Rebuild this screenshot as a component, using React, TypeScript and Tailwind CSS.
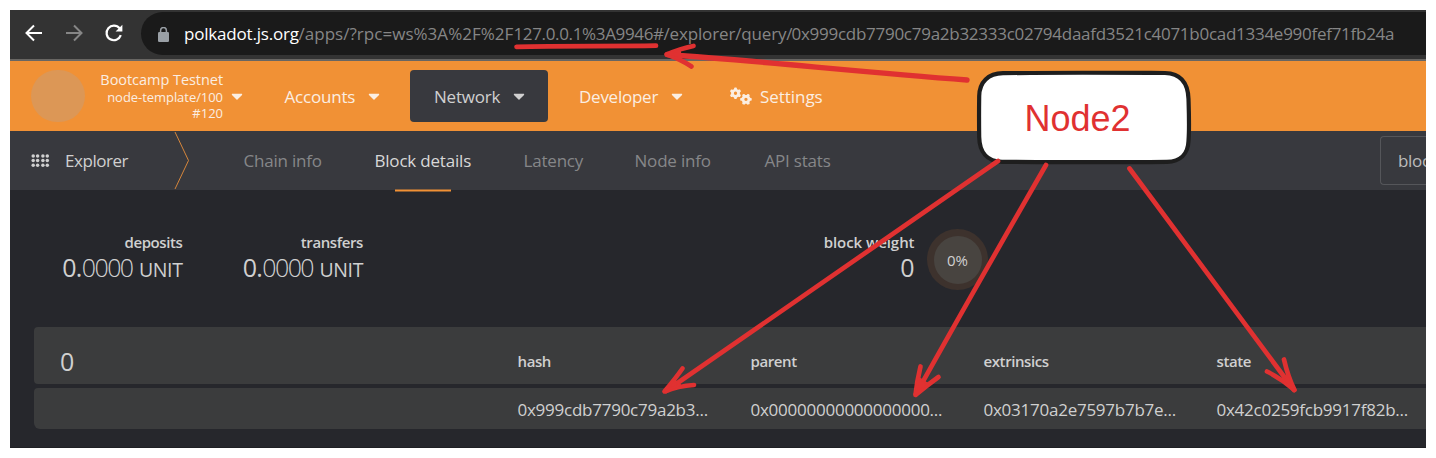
import React from 'react';
import { FaCaretDown } from 'react-icons/fa';
import { FaGears } from 'react-icons/fa6';

const columns = [
  { label: 'hash', value: '0x999cdb7790c79a2b3...' },
  { label: 'parent', value: '0x00000000000000000...' },
  { label: 'extrinsics', value: '0x03170a2e7597b7b7e...' },
  { label: 'state', value: '0x42c0259fcb9917f82b...' },
];

function BrowserBar() {
  return (
    <div className="flex h-[51px] shrink-0 border-b-2 border-[#686663] bg-[#333333] pt-[2px]">
      <div className="flex h-[43px] w-[131px] shrink-0 items-center pl-[15px]">
        <svg className="size-[18px] -translate-y-px" viewBox="0 0 18 18" fill="none" stroke="#fff" strokeWidth="2">
          <path d="M17 9H2M9 1.5L1.5 9L9 16.5" />
        </svg>
        <svg className="ml-[22px] size-[18px] -translate-y-px" viewBox="0 0 18 18" fill="none" stroke="#868686" strokeWidth="2">
          <path d="M1 9H16M9 1.5L16.5 9L9 16.5" />
        </svg>
        <svg className="ml-[21px] size-[20px] -translate-y-px" viewBox="0 0 20 20" fill="none">
          <path d="M15.6 5.4A7.3 7.3 0 1 0 16.8 12.2" stroke="#fff" strokeWidth="2.2" />
          <path d="M18.4 1.8V8.6H11.6Z" fill="#fff" />
        </svg>
      </div>
      <div className="flex h-[43px] min-w-0 flex-1 items-center rounded-l-full bg-[#1a1a1a] pl-[17px]">
        <svg className="mt-px h-[15px] w-[11px] shrink-0" viewBox="0 0 11 15">
          <rect x="0" y="5" width="11" height="10" rx="1.2" fill="#9aa0a6" />
          <path d="M2.6 6V3.4a2.9 2.9 0 0 1 5.8 0V6" fill="none" stroke="#9aa0a6" strokeWidth="1.5" />
        </svg>
        <div className="ml-[15px] flex whitespace-nowrap text-[17px] leading-[24px] text-[#868686]">
          <span className="w-[114.5px] shrink-0 tracking-[-0.2px] text-white">polkadot.js.org</span>
          <span className="w-[215px] shrink-0 tracking-[0.03px]">/apps/?rpc=ws%3A%2F%2F</span>
          <span className="w-[150px] shrink-0 tracking-[-0.35px]">127.0.0.1%3A9946#</span>
          <span className="w-[128px] shrink-0 tracking-[-0.15px]">/explorer/query/</span>
          <span className="tracking-[-0.27px]">0x999cdb7790c79a2b32333c02794daafd3521c4071b0cad1334e990fef71fb24a</span>
        </div>
      </div>
    </div>
  );
}

function Caret() {
  return <FaCaretDown className="size-[18px] shrink-0" />;
}

function MenuBar() {
  return (
    <div className="flex h-[70px] shrink-0 items-center bg-[#f19135] text-[17px] text-[#fbeee2]">
      <div className="ml-[21px] h-[52px] w-[54px] shrink-0 rounded-full bg-[#dc9756]" />
      <div className="w-[138px] shrink-0 pb-px text-right">
        <div className="text-[14.5px] leading-[19px] tracking-[-0.05px]">Bootcamp Testnet</div>
        <div className="text-[13px] leading-[16px] tracking-[-0.05px]">node-template/100</div>
        <div className="text-[13px] leading-[16px]">#120</div>
      </div>
      <div className="ml-[5px] w-[56.5px]"><Caret /></div>
      <div className="flex w-[115.5px] shrink-0 items-center">
        <span className="w-[80px] pt-[2px] tracking-[-0.2px]">Accounts</span>
        <Caret />
      </div>
      <div className="ml-[10px] flex h-[52px] w-[138px] shrink-0 items-center rounded-[4px] bg-[#38393e] pl-[24px] text-[#d0d0d0]">
        <span className="w-[76px] pt-[2px] tracking-[-0.2px]">Network</span>
        <Caret />
      </div>
      <div className="ml-[31px] flex w-[151px] shrink-0 items-center">
        <span className="w-[89px] pt-[2px] tracking-[-0.25px]">Developer</span>
        <Caret />
      </div>
      <FaGears className="h-[18px] w-[22px] shrink-0" />
      <span className="ml-[8px] pt-[2px] tracking-[-0.05px]">Settings</span>
    </div>
  );
}

function TabBar() {
  return (
    <div className="flex h-[59px] w-[1416px] shrink-0 items-center bg-[#38393e] text-[17px] tracking-[-0.2px] text-[#868789]">
      <svg className="ml-[21px] h-[14px] w-[19px] shrink-0" viewBox="0 0 19 14" fill="#d0d0d0">
        {[2.2, 6.6, 11.9, 16.3].map((x) =>
          [2, 6.6, 11.2].map((y) => <circle key={`${x}-${y}`} cx={x} cy={y} r="1.75" />),
        )}
      </svg>
      <span className="ml-[15px] w-[109px] shrink-0 tracking-[-0.45px] text-[#d0d0d0]">Explorer</span>
      <svg className="h-[59px] w-[16px] shrink-0" viewBox="0 0 16 59" fill="none" stroke="#d6863b">
        <path d="M1 1L14.5 29.5L1 58" />
      </svg>
      <span className="ml-[53.5px] w-[131px] shrink-0">Chain info</span>
      <span className="flex h-[60px] w-[149px] shrink-0 translate-y-[0.5px] flex-col text-[#d8d8d8]">
        <span className="h-[58px] leading-[58px]">Block details</span>
        <span className="ml-[20px] h-[2px] w-[56px] bg-[#f19135]" />
      </span>
      <span className="w-[111px] shrink-0">Latency</span>
      <span className="w-[130px] shrink-0">Node info</span>
      <span className="w-[615.5px] shrink-0">API stats</span>
      <div className="flex h-[49px] min-w-0 flex-1 items-center overflow-hidden rounded-l-[4px] border border-r-0 border-[#55565a] pl-[17px] tracking-[-0.3px] text-[#bcbcbc]">
        bloc
      </div>
    </div>
  );
}

function Balance({ label }: { label: string }) {
  return (
    <div className="w-[180.5px] shrink-0 text-right">
      <div className="text-[15px] font-semibold leading-[20px] tracking-[-0.4px]">{label}</div>
      <div className="-mt-px whitespace-nowrap text-[25px] leading-[32px]">
        <span className="tracking-[-0.6px]">0.</span>
        <span className="font-light tracking-[-1.6px]">0000</span>
        <span className="ml-[6.5px] text-[19.5px] tracking-[-0.4px]">UNIT</span>
      </div>
    </div>
  );
}

function Summary() {
  return (
    <div className="flex h-[137px] shrink-0 pt-[42px]">
      <div className="flex w-[812px] shrink-0">
        <div className="-ml-[8px] flex">
          <Balance label="deposits" />
          <Balance label="transfers" />
        </div>
      </div>
      <div className="w-[92.5px] shrink-0 text-right">
        <div className="text-[15px] font-semibold leading-[20px] tracking-[-0.05px]">block weight</div>
        <div className="-mt-px text-[25px] leading-[32px]">0</div>
      </div>
      <div className="-mt-[3px] ml-[12.5px] flex size-[61px] shrink-0 items-center justify-center rounded-full bg-[#3d322d]">
        <div className="flex size-[48px] items-center justify-center rounded-full bg-[#484440] pt-px text-[15px] tracking-[-0.1px]">
          0%
        </div>
      </div>
    </div>
  );
}

function BlockTable() {
  return (
    <div className="flex flex-col gap-[4px] pl-[24px]">
      <div className="flex h-[57px] items-center rounded-l-[4px] bg-[#3b3c3d] pl-[26px] pt-[12px]">
        <span className="-mt-[2px] w-[457.5px] shrink-0 text-[25px] leading-[32px]">0</span>
        {columns.map((c) => (
          <span key={c.label} className="w-[233px] shrink-0 text-[15px] font-semibold tracking-[-0.4px]">
            {c.label}
          </span>
        ))}
      </div>
      <div className="flex h-[41px] items-center overflow-hidden rounded-tl-[4px] rounded-bl-[6px] bg-[#3b3c3d] pl-[483.5px] pt-[2px]">
        {columns.map((c) => (
          <span key={c.label} className="w-[233px] shrink-0 text-[17px] tracking-[-0.25px]">
            {c.value}
          </span>
        ))}
      </div>
    </div>
  );
}

function Annotations() {
  return (
    <svg className="pointer-events-none absolute left-0 top-0" width="1436" height="458" viewBox="0 0 1436 458" fill="none">
      <path
        d="M1003 73.2C1060 72.4 1120 72.8 1165 73C1181 73.5 1188 83 1188.5 99C1189 115 1189.5 128 1188.5 141C1188 154 1180 161.5 1167 161.8C1110 162.5 1050 162.2 1002 161.8C987 161.5 979.5 152 979.2 137C979 124 979 110 979.2 96C979.5 82 988 73.4 1003 73.2Z"
        fill="#fff"
        stroke="#1e1e1e"
        strokeWidth="4.2"
      />
      <text x="1024.5" y="131" fill="#e03131" fontSize="36" fontFamily="Liberation Sans, Arial, sans-serif">
        Node2
      </text>
      <g stroke="#e03131" strokeWidth="4.7" strokeLinecap="round" strokeLinejoin="round">
        <path d="M516.5 46.8C560 45.5 610 46.5 656 45.7" />
        <path d="M667 54.5C760 61 860 72 967 80" strokeWidth="5.4" />
        <path d="M693.5 46Q680 48.5 667 54.5Q682 60 691.5 66.5" />
        <path d="M998 161L666 391" />
        <path d="M682.5 368.5Q675 379 664.5 391.5Q678 386 694 385" />
        <path d="M1046 165C1000 245 960 315 916 394" />
        <path d="M920.5 366.5Q917 381 915.5 395Q926 386 938.5 377" />
        <path d="M1129.5 168.5L1294 390" />
        <path d="M1284 359.5Q1288 377 1294.5 390Q1282 379 1267 371.5" />
        <path d="M665.5 54L680 50.5L680 59Z" fill="#e03131" strokeWidth="2" />
        <path d="M664.5 391.5L674 380L680 384.5Z" fill="#e03131" strokeWidth="2" />
        <path d="M915.5 394.5L919 378L928 384Z" fill="#e03131" strokeWidth="2" />
        <path d="M1294.5 390L1281 380L1289 375Z" fill="#e03131" strokeWidth="2" />
      </g>
    </svg>
  );
}

export default function App() {
  return (
    <div className="relative h-[458px] w-[1436px] overflow-hidden bg-white p-[10px] font-['Open_Sans','Noto_Sans',sans-serif]">
      <div className="flex h-[438px] w-[1416px] flex-col overflow-hidden border-b border-[#1f2024] bg-[#26272c] text-[#d0d0d0]">
        <BrowserBar />
        <MenuBar />
        <TabBar />
        <Summary />
        <BlockTable />
      </div>
      <Annotations />
    </div>
  );
}
